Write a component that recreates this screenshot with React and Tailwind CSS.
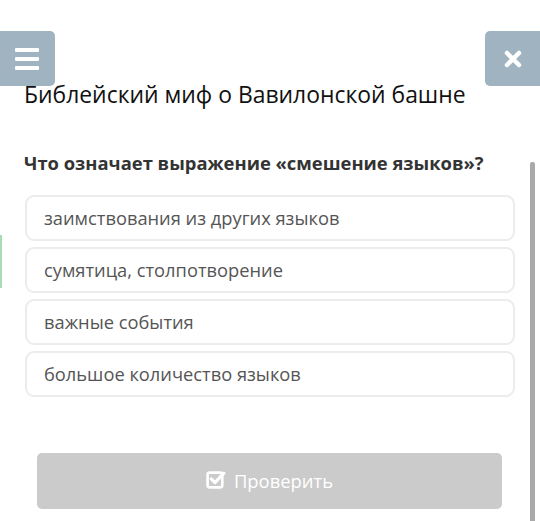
import React from "react";

const options = [
  "заимствования из других языков",
  "сумятица, столпотворение",
  "важные события",
  "большое количество языков",
];

export default function App() {
  return (
    <div
      className="relative w-[540px] h-[521px] overflow-hidden bg-white"
      style={{ fontFamily: '"Open Sans", "Noto Sans", sans-serif' }}
    >
      {/* menu button */}
      <div className="absolute left-0 top-[31px] w-[55px] h-[55px] bg-[#9fb3c0] rounded-r-[5px] flex flex-col items-center justify-center gap-[5px] pr-[2px]">
        <div className="w-[24px] h-[4px] bg-white rounded-[1px]" />
        <div className="w-[24px] h-[4px] bg-white rounded-[1px]" />
        <div className="w-[24px] h-[4px] bg-white rounded-[1px]" />
      </div>
      {/* close button */}
      <div className="absolute right-0 top-[31px] w-[55px] h-[55px] bg-[#9fb3c0] rounded-l-[5px] flex items-center justify-center">
        <svg width="20" height="20" viewBox="0 0 20 20">
          <path d="M4 4 L16 16 M16 4 L4 16" stroke="white" strokeWidth="4.5" strokeLinecap="round" />
        </svg>
      </div>
      {/* green marker */}
      <div className="absolute left-0 top-[235px] w-[2px] h-[53px] bg-[#a6dcb6]" />
      {/* scrollbar */}
      <div className="absolute left-[530px] top-[162px] w-[5px] h-[359px] bg-[#a9a9a9] rounded-t-[2px]" />

      <div className="pt-[79px] pl-[24px] pr-[25px]">
        <h1 className="text-[22.9px] leading-[31px] text-[#111] font-normal">
          Библейский миф о Вавилонской башне
        </h1>
        <p className="mt-[40px] text-[18.4px] leading-[25px] font-bold text-[#333]">
          Что означает выражение «смешение языков»?
        </p>
        <div className="mt-[20px] ml-[1px] flex flex-col gap-[6px]">
          {options.map((o) => (
            <div
              key={o}
              className="h-[46px] border-2 border-[#ececec] rounded-[9px] flex items-center pl-[17px] text-[18.3px] text-[#555]"
            >
              {o}
            </div>
          ))}
        </div>
        <div className="mt-[56px] ml-[13px] w-[465px] h-[56px] bg-[#cbcbcb] rounded-[5px] flex items-center justify-center gap-[8px] text-white text-[18.4px]">
          <svg width="20" height="19" viewBox="0 0 19 18" className="mb-[4px]">
            <rect x="1.5" y="2.5" width="14" height="14" rx="2" fill="none" stroke="white" strokeWidth="2.5" />
            <path d="M5 8.5 L8.5 12 L17 3" fill="none" stroke="white" strokeWidth="3" strokeLinecap="round" strokeLinejoin="round" />
          </svg>
          <span>Проверить</span>
        </div>
      </div>
    </div>
  );
}
